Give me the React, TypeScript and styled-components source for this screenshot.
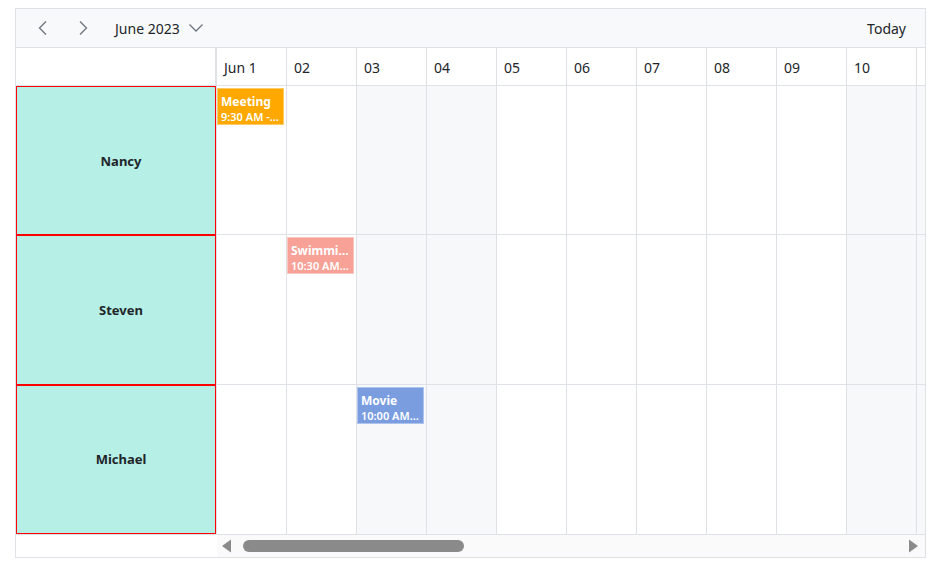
import React from 'react'
import styled, { createGlobalStyle } from 'styled-components'

const GlobalStyle = createGlobalStyle`
  body {
    margin: 0;
    background: #fff;
    font-family: 'Noto Sans', 'Open Sans', sans-serif;
    color: #212529;
  }
`

const CELL_W = 70
const DAY_COUNT = 11

type Resource = { name: string }
type Appointment = {
  resource: number
  day: number
  title: string
  time: string
  color: string
}

const resources: Resource[] = [{ name: 'Nancy' }, { name: 'Steven' }, { name: 'Michael' }]

const appointments: Appointment[] = [
  { resource: 0, day: 0, title: 'Meeting', time: '9:30 AM - 11:00 AM', color: '#ffa800' },
  { resource: 1, day: 1, title: 'Swimming', time: '10:30 AM - 12:00 PM', color: '#f7a197' },
  { resource: 2, day: 2, title: 'Movie', time: '10:00 AM - 12:00 PM', color: '#7a9de0' },
]

// June 2023: the 1st is a Thursday
const isWeekend = (day: number) => {
  const dow = (4 + day) % 7
  return dow === 0 || dow === 6
}

const dayLabel = (day: number) =>
  day === 0 ? 'Jun 1' : String(day + 1).padStart(2, '0')

const Scheduler = styled.div`
  margin: 8px 0 0 15px;
  width: 909px;
  border: 1px solid #dee2e6;
  display: flex;
  flex-direction: column;
  font-size: 14px;
`

const Toolbar = styled.div`
  height: 38px;
  background: #f8f9fa;
  border-bottom: 1px solid #dee2e6;
  display: flex;
  align-items: center;
  padding: 0 19px 0 7px;
`

const NavButton = styled.button`
  width: 40px;
  height: 30px;
  border: none;
  background: transparent;
  display: flex;
  align-items: center;
  justify-content: center;
  padding: 0;
  color: #6c757d;
`

const MonthButton = styled.button`
  border: none;
  background: transparent;
  display: flex;
  align-items: center;
  gap: 8px;
  margin-left: 12px;
  padding: 0;
  font: inherit;
  font-size: 14px;
  color: #212529;
`

const Spacer = styled.div`
  flex: 1;
`

const TodayButton = styled.button`
  border: none;
  background: transparent;
  font: inherit;
  font-size: 14px;
  color: #212529;
  padding: 0;
`

const Body = styled.div`
  display: flex;
`

const ResourcePane = styled.div`
  width: 200px;
  flex-shrink: 0;
  display: flex;
  flex-direction: column;
`

const Corner = styled.div`
  height: 37px;
  border-bottom: 1px solid #dee2e6;
  border-right: 1px solid #dee2e6;
`

const ResourceList = styled.div`
  height: 448px;
  display: grid;
  grid-template-rows: repeat(3, 1fr);
`

const ResourceCell = styled.div`
  background: #b5efe6;
  border: 1px solid #ff0000;
  display: flex;
  align-items: center;
  justify-content: center;
  padding-left: 10px;
  font-weight: 700;
  font-size: 13px;
  color: #212529;
`

const TimelinePane = styled.div`
  flex: 1;
  overflow: hidden;
  display: flex;
  flex-direction: column;
  border-left: 1px solid #dee2e6;
`

const DateRow = styled.div`
  display: flex;
  height: 37px;
  border-bottom: 1px solid #dee2e6;
`

const DateCell = styled.div`
  width: ${CELL_W}px;
  flex-shrink: 0;
  box-sizing: border-box;
  border-right: 1px solid #dee2e6;
  padding: 2px 0 0 7px;
  display: flex;
  align-items: center;
  font-size: 14px;
  color: #212529;
`

const GridRows = styled.div`
  height: 448px;
  display: grid;
  grid-template-rows: repeat(3, 1fr);
`

const LaneRow = styled.div<{ $last?: boolean }>`
  display: flex;
  border-bottom: ${(p) => (p.$last ? 'none' : '1px solid #dee2e6')};
`

const DayCell = styled.div<{ $weekend: boolean }>`
  width: ${CELL_W}px;
  flex-shrink: 0;
  box-sizing: border-box;
  border-right: 1px solid #dee2e6;
  background: ${(p) => (p.$weekend ? '#f7f8fa' : '#fff')};
  position: relative;
`

const Event = styled.div<{ $color: string }>`
  position: absolute;
  top: 2px;
  left: 0;
  width: 67px;
  height: 37px;
  box-sizing: border-box;
  background: ${(p) => p.$color};
  border: 1px solid rgba(255, 255, 255, 0.4);
  color: #fff;
  padding: 4px 3px 0 3px;
  overflow: hidden;
  display: flex;
  flex-direction: column;
  justify-content: flex-start;
`

const EventTitle = styled.div`
  font-weight: 700;
  font-size: 12px;
  line-height: 17px;
  white-space: nowrap;
  overflow: hidden;
  text-overflow: ellipsis;
`

const EventTime = styled.div`
  font-weight: 600;
  font-size: 11px;
  line-height: 14px;
  white-space: nowrap;
  overflow: hidden;
  text-overflow: ellipsis;
`

const ScrollRow = styled.div`
  display: flex;
  height: 22px;
  border-top: 1px solid #dee2e6;
`

const ScrollSpacer = styled.div`
  width: 201px;
  flex-shrink: 0;
`

const ScrollTrack = styled.div`
  flex: 1;
  background: #fafafa;
  display: flex;
  align-items: center;
  padding: 0 6px 0 4px;
  gap: 11px;
`

const ScrollThumbArea = styled.div`
  flex: 1;
  display: flex;
`

const ScrollThumb = styled.div`
  width: 221px;
  height: 12px;
  border-radius: 6px;
  background: #8a8a8a;
`

const Arrow = styled.svg`
  flex-shrink: 0;
`

const ChevronLeft = () => (
  <svg width="14" height="16" viewBox="0 0 14 16">
    <path d="M10 1.5 L3.5 8 L10 14.5" fill="none" stroke="#6c757d" strokeWidth="1.3" />
  </svg>
)

const ChevronRight = () => (
  <svg width="14" height="16" viewBox="0 0 14 16">
    <path d="M4 1.5 L10.5 8 L4 14.5" fill="none" stroke="#6c757d" strokeWidth="1.3" />
  </svg>
)

const ChevronDown = () => (
  <svg width="16" height="10" viewBox="0 0 16 10">
    <path d="M1.5 1.5 L8 8 L14.5 1.5" fill="none" stroke="#6c757d" strokeWidth="1.3" />
  </svg>
)

const days = Array.from({ length: DAY_COUNT }, (_, i) => i)

export default function App() {
  return (
    <>
      <GlobalStyle />
      <Scheduler>
        <Toolbar>
          <NavButton aria-label="Previous">
            <ChevronLeft />
          </NavButton>
          <NavButton aria-label="Next">
            <ChevronRight />
          </NavButton>
          <MonthButton>
            June 2023
            <ChevronDown />
          </MonthButton>
          <Spacer />
          <TodayButton>Today</TodayButton>
        </Toolbar>
        <Body>
          <ResourcePane>
            <Corner />
            <ResourceList>
              {resources.map((r) => (
                <ResourceCell key={r.name}>{r.name}</ResourceCell>
              ))}
            </ResourceList>
          </ResourcePane>
          <TimelinePane>
            <DateRow>
              {days.map((d) => (
                <DateCell key={d}>{dayLabel(d)}</DateCell>
              ))}
            </DateRow>
            <GridRows>
              {resources.map((r, ri) => (
                <LaneRow key={r.name} $last={ri === resources.length - 1}>
                  {days.map((d) => {
                    const appts = appointments.filter((a) => a.resource === ri && a.day === d)
                    return (
                      <DayCell key={d} $weekend={isWeekend(d)}>
                        {appts.map((a) => (
                          <Event key={a.title} $color={a.color}>
                            <EventTitle>{a.title}</EventTitle>
                            <EventTime>{a.time}</EventTime>
                          </Event>
                        ))}
                      </DayCell>
                    )
                  })}
                </LaneRow>
              ))}
            </GridRows>
          </TimelinePane>
        </Body>
        <ScrollRow>
          <ScrollSpacer />
          <ScrollTrack>
            <Arrow width="11" height="14" viewBox="0 0 11 14">
              <path d="M10 0.5 L10 13.5 L1 7 Z" fill="#8a8a8a" />
            </Arrow>
            <ScrollThumbArea>
              <ScrollThumb />
            </ScrollThumbArea>
            <Arrow width="11" height="14" viewBox="0 0 11 14">
              <path d="M1 0.5 L1 13.5 L10 7 Z" fill="#8a8a8a" />
            </Arrow>
          </ScrollTrack>
        </ScrollRow>
      </Scheduler>
    </>
  )
}
